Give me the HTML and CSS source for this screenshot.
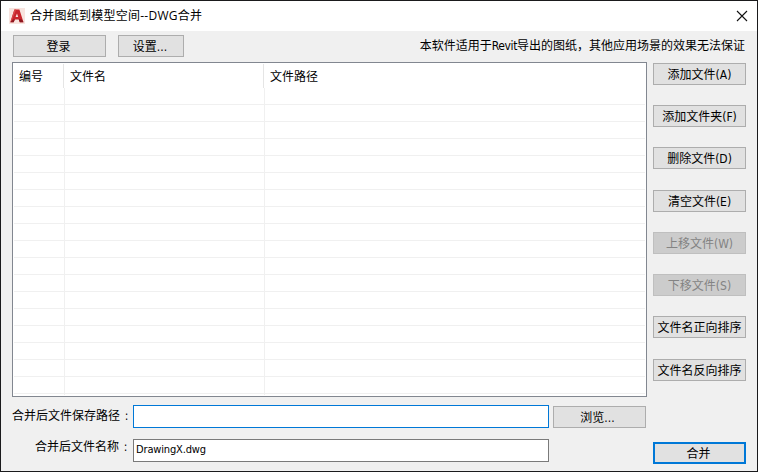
FILE: index.html
```html
<!DOCTYPE html>
<html lang="zh-CN">
<head>
<meta charset="utf-8">
<title>合并图纸到模型空间--DWG合并</title>
<link rel="stylesheet" href="styles.css">
</head>
<body>
<div class="window">
  <header class="titlebar">
    <svg class="logo" width="16" height="16" viewBox="0 0 16 16">
      <rect width="16" height="16" fill="#f8e4df"/>
      <path fill="#c8262d" fill-rule="evenodd" d="M5.4 1.6h5l4.1 12.6h-3.8l-.9-2.8H5.9l-1.2 2.8H1.3zM8 5.4L6.6 9h2.6z"/>
      <path fill="#8c1820" d="M1.3 14.2L4 11.4l1.8-.2-1.1 3zM9.7 11.2l3.2.2 1.6 2.8h-3.6z"/>
      <path fill="#d9484a" d="M5.4 1.6h1.8L3.2 11.6 1.3 14.2z"/>
    </svg>
    <span class="title">合并图纸到模型空间--DWG合并</span>
    <svg class="close" width="12" height="12" viewBox="0 0 12 12">
      <path d="M1 1l10 10M11 1L1 11" stroke="#111" stroke-width="1.1" fill="none"/>
    </svg>
  </header>
  <div class="toolbar">
    <button class="btn">登录</button>
    <button class="btn narrow">设置...</button>
    <span class="hint">本软件适用于<span class="latin">Revit</span>导出的图纸，其他应用场景的效果无法保证</span>
  </div>
  <main class="content">
    <div class="list">
      <div class="list-head"><span>编号</span><span>文件名</span><span>文件路径</span></div>
      <div class="list-body"><i></i><i></i><i></i></div>
    </div>
    <div class="actions">
      <button class="btn">添加文件(A)</button>
      <button class="btn">添加文件夹(F)</button>
      <button class="btn">删除文件(D)</button>
      <button class="btn gap">清空文件(E)</button>
      <button class="btn" disabled>上移文件(W)</button>
      <button class="btn" disabled>下移文件(S)</button>
      <button class="btn">文件名正向排序</button>
      <button class="btn gap">文件名反向排序</button>
    </div>
  </main>
  <footer class="form">
    <div class="fields">
      <div class="row">
        <label for="path">合并后文件保存路径<span class="colon">:</span></label>
        <input id="path" class="focused" type="text">
        <button class="btn">浏览...</button>
      </div>
      <div class="row second">
        <label for="name">合并后文件名称<span class="colon">:</span></label>
        <input id="name" type="text" value="DrawingX.dwg">
      </div>
    </div>
    <button class="btn primary">合并</button>
  </footer>
</div>
</body>
</html>
```
FILE: styles.css
```css
* { box-sizing: border-box; }
body {
  margin: 0;
  font: 12px/16px "DejaVu Sans Condensed", "Noto Sans CJK SC", sans-serif;
  color: #000;
}
.window {
  width: 758px;
  height: 472px;
  border: 1px solid #1a1a1c;
  background: #f0f0f0;
  overflow: hidden;
}
.titlebar {
  display: flex;
  align-items: center;
  height: 30px;
  padding: 0 9px 0 8px;
  background: #fff;
}
.title {
  flex: 1;
  margin-left: 5px;
  font-family: "Open Sans", "Noto Sans CJK SC", sans-serif;
  letter-spacing: 0.25px;
}
.logo, .close { display: block; }
.toolbar {
  display: flex;
  align-items: flex-start;
  gap: 12px;
  height: 31px;
  padding: 4px 11px 0 12px;
}
.hint {
  margin-left: auto;
  padding: 3px 1px 0 0;
  white-space: nowrap;
}
.latin { letter-spacing: -0.4px; }
.btn {
  display: block;
  flex: none;
  width: 93px;
  height: 22px;
  margin: 0;
  padding: 1px 2px 0 0;
  border: 1px solid #adadad;
  border-radius: 0;
  background: #e1e1e1;
  color: #000;
  font: inherit;
  line-height: 20px;
  text-align: center;
  white-space: nowrap;
}
.btn.narrow { width: 66px; }
.btn:disabled {
  border-color: #bfbfbf;
  background: #ccc;
  color: #838383;
}
.btn.primary {
  margin-top: 37px;
  border: 2px solid #0078d7;
  line-height: 18px;
}
.content {
  display: flex;
  gap: 6px;
  padding-left: 11px;
}
.list {
  width: 635px;
  height: 335px;
  padding: 1px;
  border: 1px solid #828790;
  background: #fff;
}
.list-head, .list-body {
  display: grid;
  grid-template-columns: 50px 200px 1fr;
}
.list-head {
  height: 24px;
  line-height: 26px;
}
.list-head span {
  height: 24px;
  padding-left: 6px;
  border-right: 1px solid #e5e5e5;
}
.list-head span:first-child { padding-left: 5px; }
.list-head span:last-child { border-right: 0; }
.list-body {
  grid-template-columns: 51px 200px 1fr;
  height: 307px;
  background: repeating-linear-gradient(#fff 0 16px, #f0f0f0 16px 17px);
}
.list-body i { border-right: 1px solid #f0f0f0; }
.list-body i:last-child { border-right: 0; }
.actions {
  display: flex;
  flex-direction: column;
  gap: 20px;
  padding-top: 1px;
}
.actions .btn { padding-right: 0; }
.actions .gap { margin-top: 1px; }
.form {
  display: flex;
  gap: 7px;
  padding: 8px 0 0 11px;
}
.fields {
  display: flex;
  flex-direction: column;
  gap: 11px;
  width: 634px;
}
.row {
  display: flex;
  height: 23px;
}
.row label {
  width: 121px;
  padding: 3px 2px 0 0;
  text-align: right;
  white-space: nowrap;
}
.row.second label { padding-top: 0; }
.colon {
  display: inline-block;
  width: 12px;
  padding-left: 1px;
  text-align: center;
}
.row input {
  width: 416px;
  height: 23px;
  margin: 0;
  padding: 0 2px 2px;
  border: 1px solid #7a7a7a;
  border-radius: 0;
  outline: 0;
  background: #fff;
  color: #000;
  font: 11px "DejaVu Sans Condensed", "Noto Sans CJK SC", sans-serif;
  letter-spacing: -0.15px;
}
.row input.focused { border-color: #0078d7; }
.row .btn { margin: 1px 0 0 4px; padding-right: 4px; }
```
